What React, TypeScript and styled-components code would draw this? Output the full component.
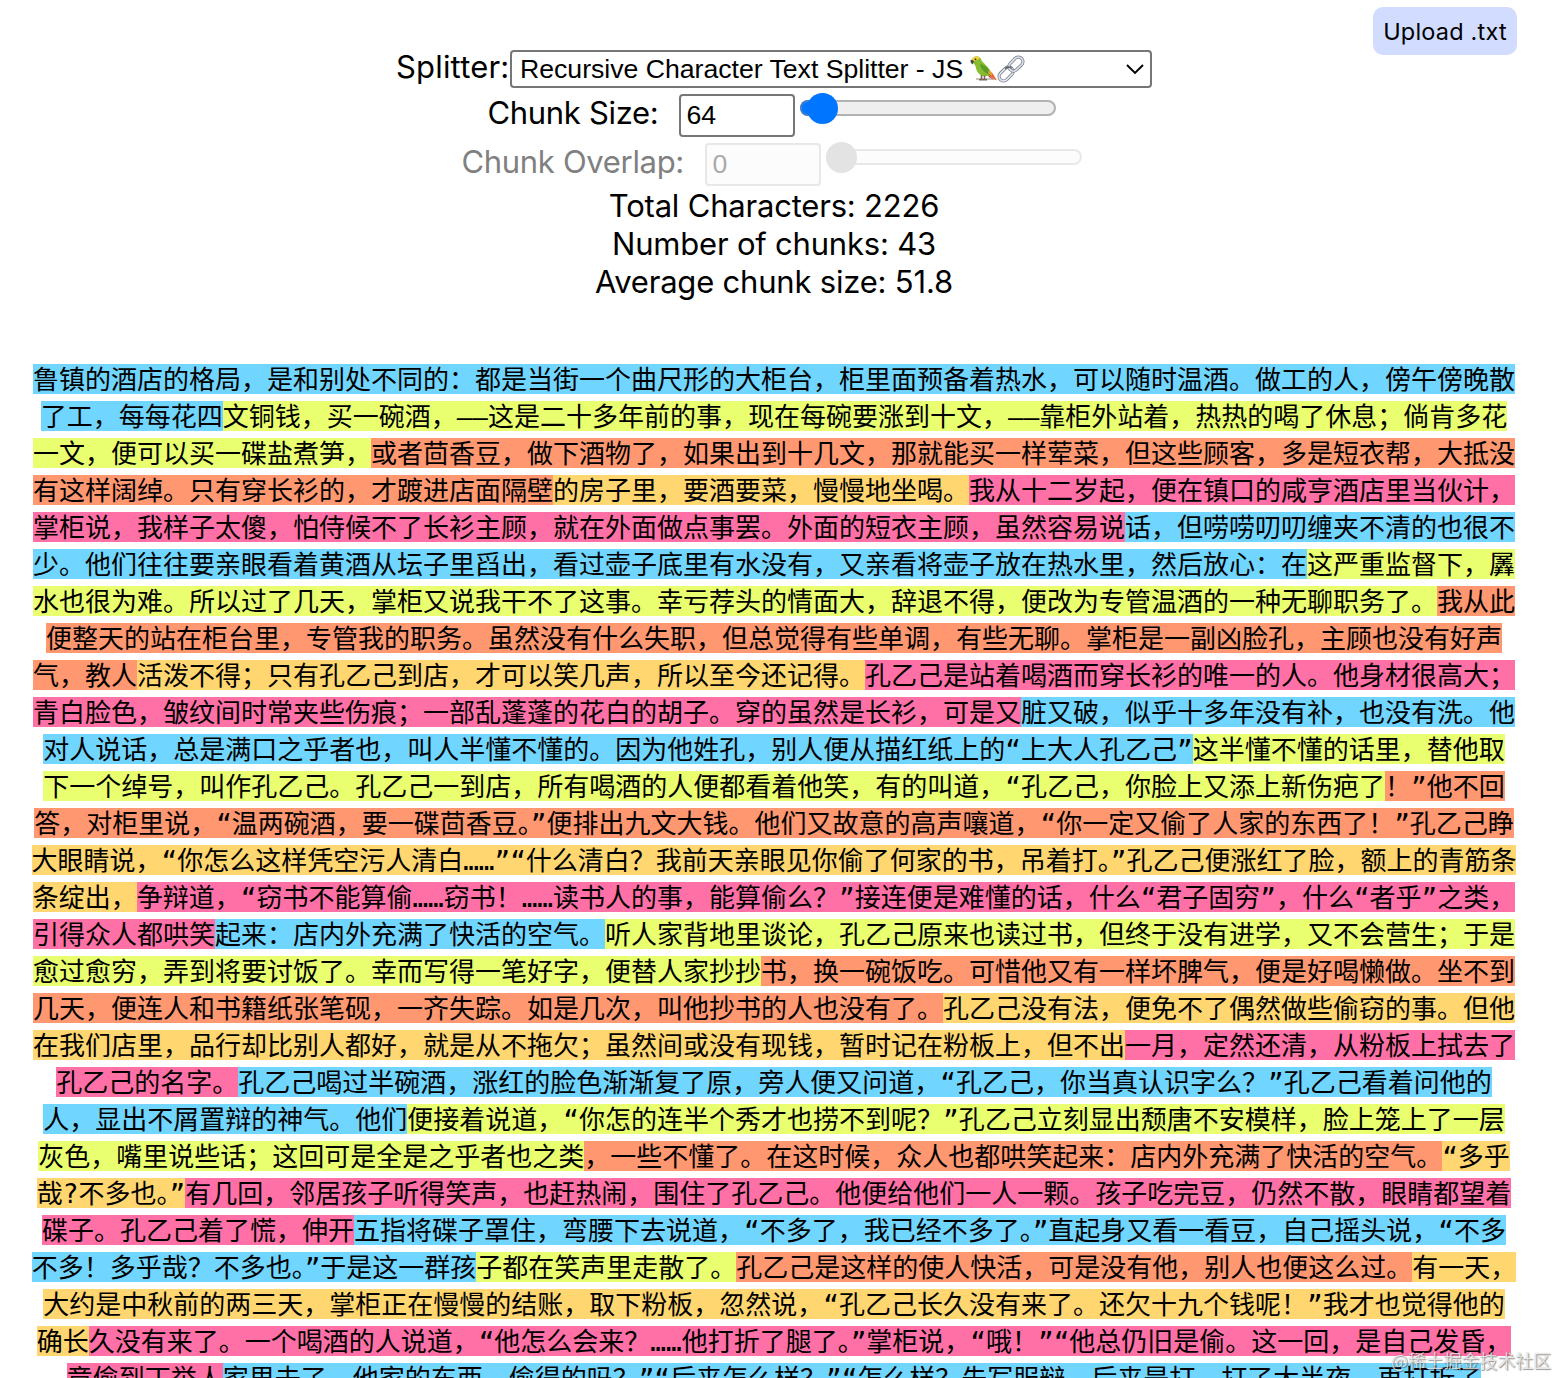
import React from "react";
import styled, { createGlobalStyle } from "styled-components";

const Global = createGlobalStyle`
  html, body { margin: 0; background: #fff; overflow: hidden; }
  * { box-sizing: border-box; }
`;

const Page = styled.main`
  position: relative;
  width: 1548px;
  height: 1378px;
  overflow: hidden;
  color: #000;
  font-family: Inter, "Noto Sans CJK SC", sans-serif;
  font-size: 31px;
  line-height: 38px;
  letter-spacing: -0.2px;
`;

const UploadButton = styled.button`
  position: absolute;
  top: 7px;
  right: 31px;
  width: 144px;
  height: 48px;
  padding: 2px 0 0;
  border: 0;
  border-radius: 10px;
  background: #d2dcff;
  color: #000;
  font: 400 23.5px/46px Inter, sans-serif;
  letter-spacing: 0.2px;
  white-space: nowrap;
`;

const Controls = styled.section`
  display: flex;
  flex-direction: column;
  align-items: center;
  padding-top: 48px;
`;

const Row = styled.div<{ $height: number; $muted?: boolean }>`
  display: flex;
  align-items: flex-start;
  height: ${(p) => p.$height}px;
  color: ${(p) => (p.$muted ? "#808080" : "#000")};
`;

const Label = styled.label<{ $width: number; $spacing?: number }>`
  width: ${(p) => p.$width}px;
  letter-spacing: ${(p) => p.$spacing ?? -0.32}px;
  white-space: nowrap;
`;

const SelectBox = styled.div`
  display: flex;
  align-items: center;
  width: 642px;
  height: 38px;
  margin-top: 2px;
  padding: 0 6px 0 8px;
  border: 2px solid #767676;
  border-radius: 4px;
  font: 26.67px/34px "Liberation Sans", Arial, sans-serif;
  letter-spacing: -0.02px;
  white-space: pre;
`;

const SelectIcons = styled.span`
  display: flex;
  flex: 1;
  padding-left: 7px;
`;

const NumberInput = styled.input`
  width: 116px;
  height: 43px;
  margin: 0;
  padding: 0 6px;
  border: 2px solid #767676;
  border-radius: 4px;
  background: #fff;
  color: #000;
  font: 26.67px "Liberation Sans", Arial, sans-serif;
  &:disabled {
    border-color: #e8e8e8;
    background: #fcfcfc;
    color: #aaa;
  }
`;

const Track = styled.div<{ $muted?: boolean }>`
  display: flex;
  align-items: center;
  width: 256px;
  height: 16px;
  margin: 6px 5px 0 5px;
  border: 2px solid ${(p) => (p.$muted ? "#e8e8e8" : "#b2b2b2")};
  border-radius: 8px;
  background: ${(p) => (p.$muted ? "#fcfcfc" : "#efefef")};
`;

const Fill = styled.div`
  flex: none;
  width: 22px;
  height: 16px;
  margin-left: -2px;
  border: 2px solid #3b7dd0;
  border-right: 0;
  border-radius: 8px 0 0 8px;
  background: #0075ff;
`;

const Thumb = styled.div<{ $muted?: boolean }>`
  flex: none;
  width: 31px;
  height: 31px;
  margin-left: ${(p) => (p.$muted ? -2 : -15)}px;
  border-radius: 50%;
  background: ${(p) => (p.$muted ? "#e3e3e3" : "#0075ff")};
`;

const Stat = styled.div`
  height: 38px;
  white-space: nowrap;
`;

const Output = styled.section`
  margin-top: 61px;
  font-family: "DejaVu Sans Mono", "Noto Sans CJK SC", monospace;
  font-size: 26px;
  line-height: 37px;
  letter-spacing: 0;
  text-align: center;
  text-spacing-trim: space-all;
`;

const Line = styled.div`
  height: 37px;
  white-space: nowrap;
`;

const Chunk = styled.span<{ $color: string }>`
  padding-top: 1px;
  background: linear-gradient(${(p) => p.$color}, ${(p) => p.$color}) 0 0 / 100% 30px no-repeat;
`;

const TightStop = styled.span`
  letter-spacing: -13px;
`;

const Watermark = styled.div`
  position: absolute;
  z-index: 1;
  left: 1391px;
  top: 1347px;
  color: rgba(255, 255, 255, 0.75);
  font: 17.9px/26px "Noto Sans CJK SC", sans-serif;
  text-shadow: 1px 1px 1px rgba(0, 0, 0, 0.4), 0 0 1px rgba(0, 0, 0, 0.3);
  white-space: nowrap;
`;

const Shell = styled.div`
  position: relative;
  width: 1558px;
  height: 1378px;
  overflow: hidden;
`;

const COLORS = ["#70d6ff", "#e9ff70", "#ff9770", "#ffd670", "#ff70a6"];

// "|" closes a chunk, each entry is one visual line.
const LINES = [
  "鲁镇的酒店的格局，是和别处不同的：都是当街一个曲尺形的大柜台，柜里面预备着热水，可以随时温酒。做工的人，傍午傍晚散",
  "了工，每每花四|文铜钱，买一碗酒，——这是二十多年前的事，现在每碗要涨到十文，——靠柜外站着，热热的喝了休息；倘肯多花",
  "一文，便可以买一碟盐煮笋，|或者茴香豆，做下酒物了，如果出到十几文，那就能买一样荤菜，但这些顾客，多是短衣帮，大抵没",
  "有这样阔绰。只有穿长衫的，才踱进店面隔壁|的房子里，要酒要菜，慢慢地坐喝。|我从十二岁起，便在镇口的咸亨酒店里当伙计，",
  "掌柜说，我样子太傻，怕侍候不了长衫主顾，就在外面做点事罢。外面的短衣主顾，虽然容易说|话，但唠唠叨叨缠夹不清的也很不",
  "少。他们往往要亲眼看着黄酒从坛子里舀出，看过壶子底里有水没有，又亲看将壶子放在热水里，然后放心：在|这严重监督下，羼",
  "水也很为难。所以过了几天，掌柜又说我干不了这事。幸亏荐头的情面大，辞退不得，便改为专管温酒的一种无聊职务了。|我从此",
  "便整天的站在柜台里，专管我的职务。虽然没有什么失职，但总觉得有些单调，有些无聊。掌柜是一副凶脸孔，主顾也没有好声",
  "气，教人|活泼不得；只有孔乙己到店，才可以笑几声，所以至今还记得。|孔乙己是站着喝酒而穿长衫的唯一的人。他身材很高大；",
  "青白脸色，皱纹间时常夹些伤痕；一部乱蓬蓬的花白的胡子。穿的虽然是长衫，可是又|脏又破，似乎十多年没有补，也没有洗。他",
  "对人说话，总是满口之乎者也，叫人半懂不懂的。因为他姓孔，别人便从描红纸上的“上大人孔乙己”|这半懂不懂的话里，替他取",
  "下一个绰号，叫作孔乙己。孔乙己一到店，所有喝酒的人便都看着他笑，有的叫道，“孔乙己，你脸上又添上新伤疤了|！”他不回",
  "答，对柜里说，“温两碗酒，要一碟茴香豆。”便排出九文大钱。他们又故意的高声嚷道，“你一定又偷了人家的东西了！”孔乙己睁|",
  "大眼睛说，“你怎么这样凭空污人清白……”“什么清白？我前天亲眼见你偷了何家的书，吊着打。”孔乙己便涨红了脸，额上的青筋条",
  "条绽出，|争辩道，“窃书不能算偷……窃书！……读书人的事，能算偷么？”接连便是难懂的话，什么“君子固穷”，什么“者乎”之类，",
  "引得众人都哄笑|起来：店内外充满了快活的空气。|听人家背地里谈论，孔乙己原来也读过书，但终于没有进学，又不会营生；于是",
  "愈过愈穷，弄到将要讨饭了。幸而写得一笔好字，便替人家抄抄|书，换一碗饭吃。可惜他又有一样坏脾气，便是好喝懒做。坐不到",
  "几天，便连人和书籍纸张笔砚，一齐失踪。如是几次，叫他抄书的人也没有了。|孔乙己没有法，便免不了偶然做些偷窃的事。但他",
  "在我们店里，品行却比别人都好，就是从不拖欠；虽然间或没有现钱，暂时记在粉板上，但不出|一月，定然还清，从粉板上拭去了",
  "孔乙己的名字。|孔乙己喝过半碗酒，涨红的脸色渐渐复了原，旁人便又问道，“孔乙己，你当真认识字么？”孔乙己看着问他的",
  "人，显出不屑置辩的神气。他们|便接着说道，“你怎的连半个秀才也捞不到呢？”孔乙己立刻显出颓唐不安模样，脸上笼上了一层",
  "灰色，嘴里说些话；这回可是全是之乎者也之类|，一些不懂了。在这时候，众人也都哄笑起来：店内外充满了快活的空气。|“多乎",
  "哉?不多也。”|有几回，邻居孩子听得笑声，也赶热闹，围住了孔乙己。他便给他们一人一颗。孩子吃完豆，仍然不散，眼睛都望着",
  "碟子。孔乙己着了慌，伸开|五指将碟子罩住，弯腰下去说道，“不多了，我已经不多了。”直起身又看一看豆，自己摇头说，“不多",
  "不多！多乎哉？不多也。”于是这一群孩|子都在笑声里走散了。|孔乙己是这样的使人快活，可是没有他，别人也便这么过。|有一天，",
  "大约是中秋前的两三天，掌柜正在慢慢的结账，取下粉板，忽然说，“孔乙己长久没有来了。还欠十九个钱呢！”我才也觉得他的",
  "确长|久没有来了。一个喝酒的人说道，“他怎么会来？……他打折了腿了。”掌柜说，“哦！”“他总仍旧是偷。这一回，是自己发昏，",
  "竟偷到丁举人|家里去了。他家的东西，偷得的吗？”“后来怎么样？”“怎么样？先写服辩，后来是打，打了大半夜，再打折了",
];

function layoutChunks() {
  let chunk = 0;
  return LINES.map((line) =>
    line
      .split("|")
      .map((text, i) => {
        if (i > 0) chunk += 1;
        return { text, color: COLORS[chunk % COLORS.length] };
      })
      .filter((part) => part.text.length > 0)
  );
}

// A full stop before a closing quote takes half its usual advance.
function ChunkText({ text }: { text: string }) {
  const parts = text.split("。”");
  return (
    <>
      {parts.map((part, i) => (
        <React.Fragment key={i}>
          {i > 0 && (
            <>
              <TightStop>。</TightStop>”
            </>
          )}
          {part}
        </React.Fragment>
      ))}
    </>
  );
}

const Parrot = () => (
  <svg width="27" height="28" viewBox="0 0 27 28">
    <path d="M6 24H26" stroke="#9a8b7d" strokeWidth="1" />
    <path d="M14 17L22 17.5L27 25.500L23.5 23.500Z" fill="#e8622c" />
    <path d="M17 18L24 25L19 22Z" fill="#b8352a" />
    <path d="M2 5C3 0.500 9 0 11 4C12 8 19 11 21.5 18C22 20.500 19 20 17 21C11 22 7 18 6 13C5.500 10 4 8 2 8Z" fill="#86bd2f" />
    <path d="M10 9C15 10 20 15 21 20C16 19 11 15 10 9Z" fill="#5a9a28" />
    <path d="M19 15C21 16 22 18 22 21L18 18Z" fill="#f0a030" />
    <path d="M2 5C3 1 8 0.500 10 3C8 4 7 6 4 6Z" fill="#f7d038" />
    <path d="M1 4.500C0 6 0.500 8 2.500 9.500L4 6Z" fill="#4b4444" />
    <circle cx="5.500" cy="4.300" r="0.900" fill="#222" />
    <path d="M11.500 20V24.500M14.500 20.500V24.500M9 24.800H17" stroke="#7a6456" strokeWidth="1.600" />
  </svg>
);

const ChainLink = () => (
  <svg width="28" height="28" viewBox="0 0 28 28" fill="none">
    <g transform="rotate(-45 14 14)">
      <rect x="-1" y="9.500" width="16" height="9" rx="4.500" stroke="#747985" strokeWidth="3.200" />
      <rect x="-1" y="9.500" width="16" height="9" rx="4.500" stroke="#dfe4ee" strokeWidth="1.700" />
      <rect x="13" y="9.500" width="16" height="9" rx="4.500" stroke="#747985" strokeWidth="3.200" />
      <rect x="13" y="9.500" width="16" height="9" rx="4.500" stroke="#dfe4ee" strokeWidth="1.700" />
      <path d="M10 9.500C13 9.500 15 11.500 15 14" stroke="#5e636d" strokeWidth="1.600" />
    </g>
  </svg>
);

export default function App() {
  return (
    <Shell>
      <Global />
      <Page>
        <UploadButton>Upload .txt</UploadButton>
        <Controls>
          <Row $height={46}>
            <Label $width={114} $spacing={0.18}>
              Splitter:
            </Label>
            <SelectBox>
              Recursive Character Text Splitter - JS
              <SelectIcons>
                <Parrot />
                <ChainLink />
              </SelectIcons>
              <svg width="18" height="12" viewBox="0 0 18 12" fill="none">
                <path d="M1 2L9 10L17 2" stroke="#000" strokeWidth="1.900" />
              </svg>
            </SelectBox>
          </Row>
          <Row $height={49}>
            <Label $width={191}>Chunk Size:</Label>
            <NumberInput defaultValue="64" />
            <Track>
              <Fill />
              <Thumb />
            </Track>
          </Row>
          <Row $height={44} $muted>
            <Label $width={243}>Chunk Overlap:</Label>
            <NumberInput defaultValue="0" disabled />
            <Track $muted>
              <Thumb $muted />
            </Track>
          </Row>
          <Stat>Total Characters: 2226</Stat>
          <Stat>Number of chunks: 43</Stat>
          <Stat>Average chunk size: 51.8</Stat>
        </Controls>
        <Output>
          {layoutChunks().map((line, i) => (
            <Line key={i}>
              {line.map((chunk, j) => (
                <Chunk key={j} $color={chunk.color}>
                  <ChunkText text={chunk.text} />
                </Chunk>
              ))}
            </Line>
          ))}
        </Output>
      </Page>
      <Watermark>@稀土掘金技术社区</Watermark>
    </Shell>
  );
}
